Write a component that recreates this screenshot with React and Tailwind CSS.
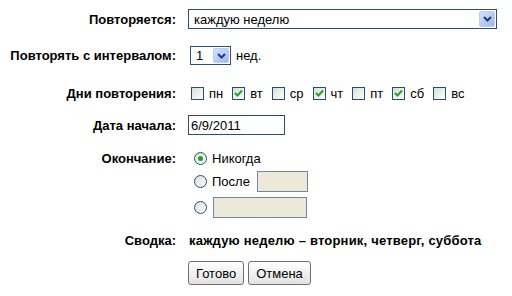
import React from "react";

const font = { fontFamily: '"Liberation Sans", Arial, sans-serif' };

const Chevron = () => (
  <svg width="9" height="6" viewBox="0 0 9 6">
    <path d="M1 1 L4.5 4.5 L8 1" fill="none" stroke="#1d3d7a" strokeWidth="2" />
  </svg>
);

const DropButton = () => (
  <div className="w-[16px] h-full flex items-center justify-center border border-[#b9cdf5] rounded-[2px] bg-gradient-to-br from-[#d5e2fd] to-[#9db8f0]">
    <Chevron />
  </div>
);

const Select = ({ value, className }) => (
  <div className={`flex items-center border border-[#2f4f6f] bg-white p-[1px] ${className}`}>
    <span className="flex-1 pl-[4px] text-[13px] leading-none text-black">{value}</span>
    <DropButton />
  </div>
);

const Checkbox = ({ checked }) => (
  <div className="w-[13px] h-[13px] border border-[#1c5180] bg-gradient-to-br from-[#dcdcd7] to-white flex items-center justify-center">
    {checked && (
      <svg width="9" height="9" viewBox="0 0 9 9">
        <path d="M1 4 L3.5 6.5 L8 1.5" fill="none" stroke="#21a121" strokeWidth="2" />
      </svg>
    )}
  </div>
);

const Radio = ({ checked }) => (
  <div className="w-[13px] h-[13px] rounded-full border border-[#1c5180] bg-gradient-to-br from-[#dcdcd7] to-white flex items-center justify-center">
    {checked && <div className="w-[5px] h-[5px] rounded-full bg-[#21a121]" />}
  </div>
);

const Label = ({ children }) => (
  <div className="w-[176px] shrink-0 text-right font-bold text-[13px] leading-none text-black">{children}</div>
);

const days = [
  { name: "пн", checked: false },
  { name: "вт", checked: true },
  { name: "ср", checked: false },
  { name: "чт", checked: true },
  { name: "пт", checked: false },
  { name: "сб", checked: true },
  { name: "вс", checked: false },
];

const Button = ({ children }) => (
  <button className="h-[24px] px-[7px] border border-[#6f6f6f] rounded-[3px] bg-gradient-to-b from-white to-[#e2e2e2] text-[13px] leading-none text-black">
    {children}
  </button>
);

export default function App() {
  return (
    <div className="w-[512px] h-[296px] bg-white overflow-hidden pt-[9px]" style={font}>
      {/* Повторяется */}
      <div className="flex items-center h-[20px]">
        <Label>Повторяется:</Label>
        <Select value="каждую неделю" className="ml-[12px] w-[309px] h-[20px]" />
      </div>

      {/* Интервал */}
      <div className="flex items-center h-[19px] mt-[17px]">
        <Label>Повторять с интервалом:</Label>
        <Select value="1" className="ml-[14px] w-[41px] h-[19px]" />
        <span className="ml-[5px] text-[13px] leading-none">нед.</span>
      </div>

      {/* Дни */}
      <div className="flex items-center h-[14px] mt-[21px]">
        <Label>Дни повторения:</Label>
        <div className="ml-[15px] flex items-center gap-[9px] text-[13px] leading-none">
          {days.map((d) => (
            <div key={d.name} className="flex items-center gap-[5px]">
              <Checkbox checked={d.checked} />
              <span>{d.name}</span>
            </div>
          ))}
        </div>
      </div>

      {/* Дата начала */}
      <div className="flex items-center h-[20px] mt-[15px]">
        <Label>Дата начала:</Label>
        <div className="ml-[12px] w-[97px] h-[20px] border border-[#2f4f6f] bg-white flex items-center pl-[2px] text-[13px] leading-none">
          6/9/2011
        </div>
      </div>

      {/* Окончание */}
      <div className="flex items-start mt-[15px]">
        <div className="h-[16px] flex items-center">
          <Label>Окончание:</Label>
        </div>
        <div className="ml-[18px] flex flex-col text-[13px] leading-none">
          <div className="h-[16px] flex items-center gap-[5px]">
            <Radio checked />
            <span>Никогда</span>
          </div>
          <div className="h-[21px] mt-[5px] flex items-center gap-[5px]">
            <Radio />
            <span>После</span>
            <div className="ml-[2px] w-[51px] h-[21px] border border-[#6d8aa3] bg-[#ece9d8]" />
          </div>
          <div className="h-[21px] mt-[5px] flex items-center gap-[6px]">
            <Radio />
            <div className="w-[94px] h-[21px] border border-[#6d8aa3] bg-[#ece9d8]" />
          </div>
        </div>
      </div>

      {/* Сводка */}
      <div className="flex items-center h-[14px] mt-[15px]">
        <Label>Сводка:</Label>
        <span className="ml-[13px] font-bold text-[13px] leading-none tracking-[0.2px]">
          каждую неделю – вторник, четверг, суббота
        </span>
      </div>

      {/* Кнопки */}
      <div className="flex items-center mt-[14px] ml-[188px] gap-[4px]">
        <Button>Готово</Button>
        <Button>Отмена</Button>
      </div>
    </div>
  );
}
